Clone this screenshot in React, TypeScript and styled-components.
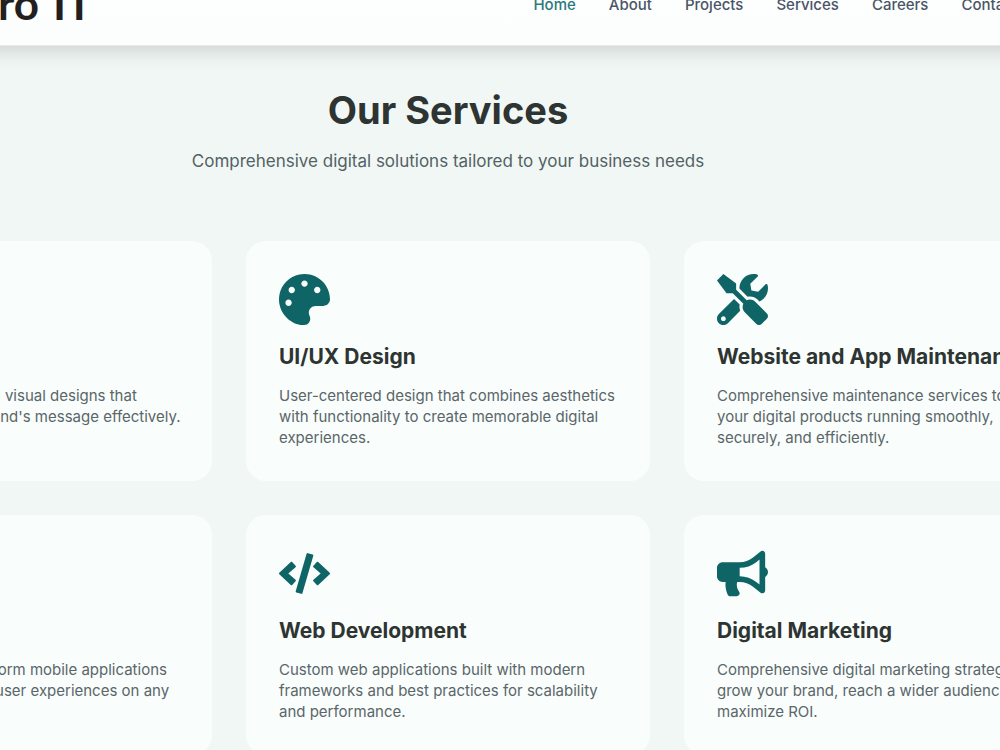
import React from "react";
import styled, { createGlobalStyle } from "styled-components";
import type { IconType } from "react-icons";
import { FaPalette, FaTools, FaCode, FaBullhorn, FaPaintBrush, FaMobileAlt } from "react-icons/fa";

const GlobalStyle = createGlobalStyle`
  * { box-sizing: border-box; }
  body {
    margin: 0;
    background: #f1f7f5;
    color: #2d3432;
    font-family: Inter, "Liberation Sans", sans-serif;
    overflow: hidden;
  }
  h1, h2, h3, p { margin: 0; }
`;

const Viewport = styled.div`
  height: 100vh;
  overflow: hidden;
`;

const Page = styled.div`
  width: calc(100% + 280px);
  margin: -36px 0 0 -192px;
`;

const Header = styled.header`
  display: flex;
  align-items: center;
  justify-content: space-between;
  height: 82px;
  padding: 0 70px 0 163px;
  background: linear-gradient(#ffffff, #fbfefd);
  border-bottom: 1px solid #e4eae9;
  box-shadow: 0 4px 20px rgba(0, 0, 0, 0.16);
`;

const Logo = styled.a`
  display: flex;
  gap: 14px;
  padding-bottom: 4px;
  color: #231f20;
  font: 700 44px/54px Lato, sans-serif;
  text-decoration: none;
`;

const Nav = styled.nav`
  display: flex;
  gap: 33px;
`;

const NavLink = styled.a<{ $active?: boolean }>`
  color: ${(p) => (p.$active ? "#2c7a7b" : "#4a5568")};
  font-size: 15px;
  font-weight: 500;
  line-height: 22px;
  text-decoration: none;
`;

const Section = styled.section`
  padding: 40px 0;
`;

const Intro = styled.div`
  margin-bottom: 67px;
  text-align: center;
`;

const Heading = styled.h1`
  font-size: 38px;
  font-weight: 700;
  line-height: 48px;
  margin-bottom: 14px;
`;

const Lead = styled.p`
  color: #536264;
  font-size: 17px;
  line-height: 26px;
`;

const Grid = styled.div`
  display: grid;
  grid-template-columns: repeat(3, minmax(0, 1fr));
  gap: 34px;
`;

const Card = styled.article`
  padding: 33px 28px 33px 33px;
  border-radius: 20px;
  background: #f9fdfc;
`;

const CardIcon = styled.div`
  height: 51px;
  margin-bottom: 17px;
  color: #0f6466;
  font-size: 51px;
  line-height: 0;
`;

const CardTitle = styled.h2`
  margin-bottom: 14px;
  font-size: 21px;
  font-weight: 700;
  line-height: 29px;
  white-space: nowrap;
`;

const CardText = styled.p`
  color: #5a6669;
  font-size: 15px;
  line-height: 21px;
`;

const links = ["Home", "About", "Projects", "Services", "Careers", "Contact"];

const services: { icon: IconType; title: string; text: string }[] = [
  {
    icon: FaPaintBrush,
    title: "Graphics",
    text: "Creative and impactful visual designs that communicate your brand's message effectively.",
  },
  {
    icon: FaPalette,
    title: "UI/UX Design",
    text: "User-centered design that combines aesthetics with functionality to create memorable digital experiences.",
  },
  {
    icon: FaTools,
    title: "Website and App Maintenance",
    text: "Comprehensive maintenance services to keep your digital products running smoothly, securely, and efficiently.",
  },
  {
    icon: FaMobileAlt,
    title: "Mobile Apps",
    text: "Native and cross-platform mobile applications that deliver seamless user experiences on any device.",
  },
  {
    icon: FaCode,
    title: "Web Development",
    text: "Custom web applications built with modern frameworks and best practices for scalability and performance.",
  },
  {
    icon: FaBullhorn,
    title: "Digital Marketing",
    text: "Comprehensive digital marketing strategies to grow your brand, reach a wider audience, and maximize ROI.",
  },
];

export default function App() {
  return (
    <Viewport>
      <GlobalStyle />
      <Page>
        <Header>
          <Logo href="#">
            <span>Pro</span>
            <span>IT</span>
          </Logo>
          <Nav>
            {links.map((label) => (
              <NavLink key={label} href="#" $active={label === "Home"}>
                {label}
              </NavLink>
            ))}
          </Nav>
        </Header>
        <Section>
          <Intro>
            <Heading>Our Services</Heading>
            <Lead>Comprehensive digital solutions tailored to your business needs</Lead>
          </Intro>
          <Grid>
            {services.map(({ icon: Icon, title, text }) => (
              <Card key={title}>
                <CardIcon>
                  <Icon aria-hidden />
                </CardIcon>
                <CardTitle>{title}</CardTitle>
                <CardText>{text}</CardText>
              </Card>
            ))}
          </Grid>
        </Section>
      </Page>
    </Viewport>
  );
}
